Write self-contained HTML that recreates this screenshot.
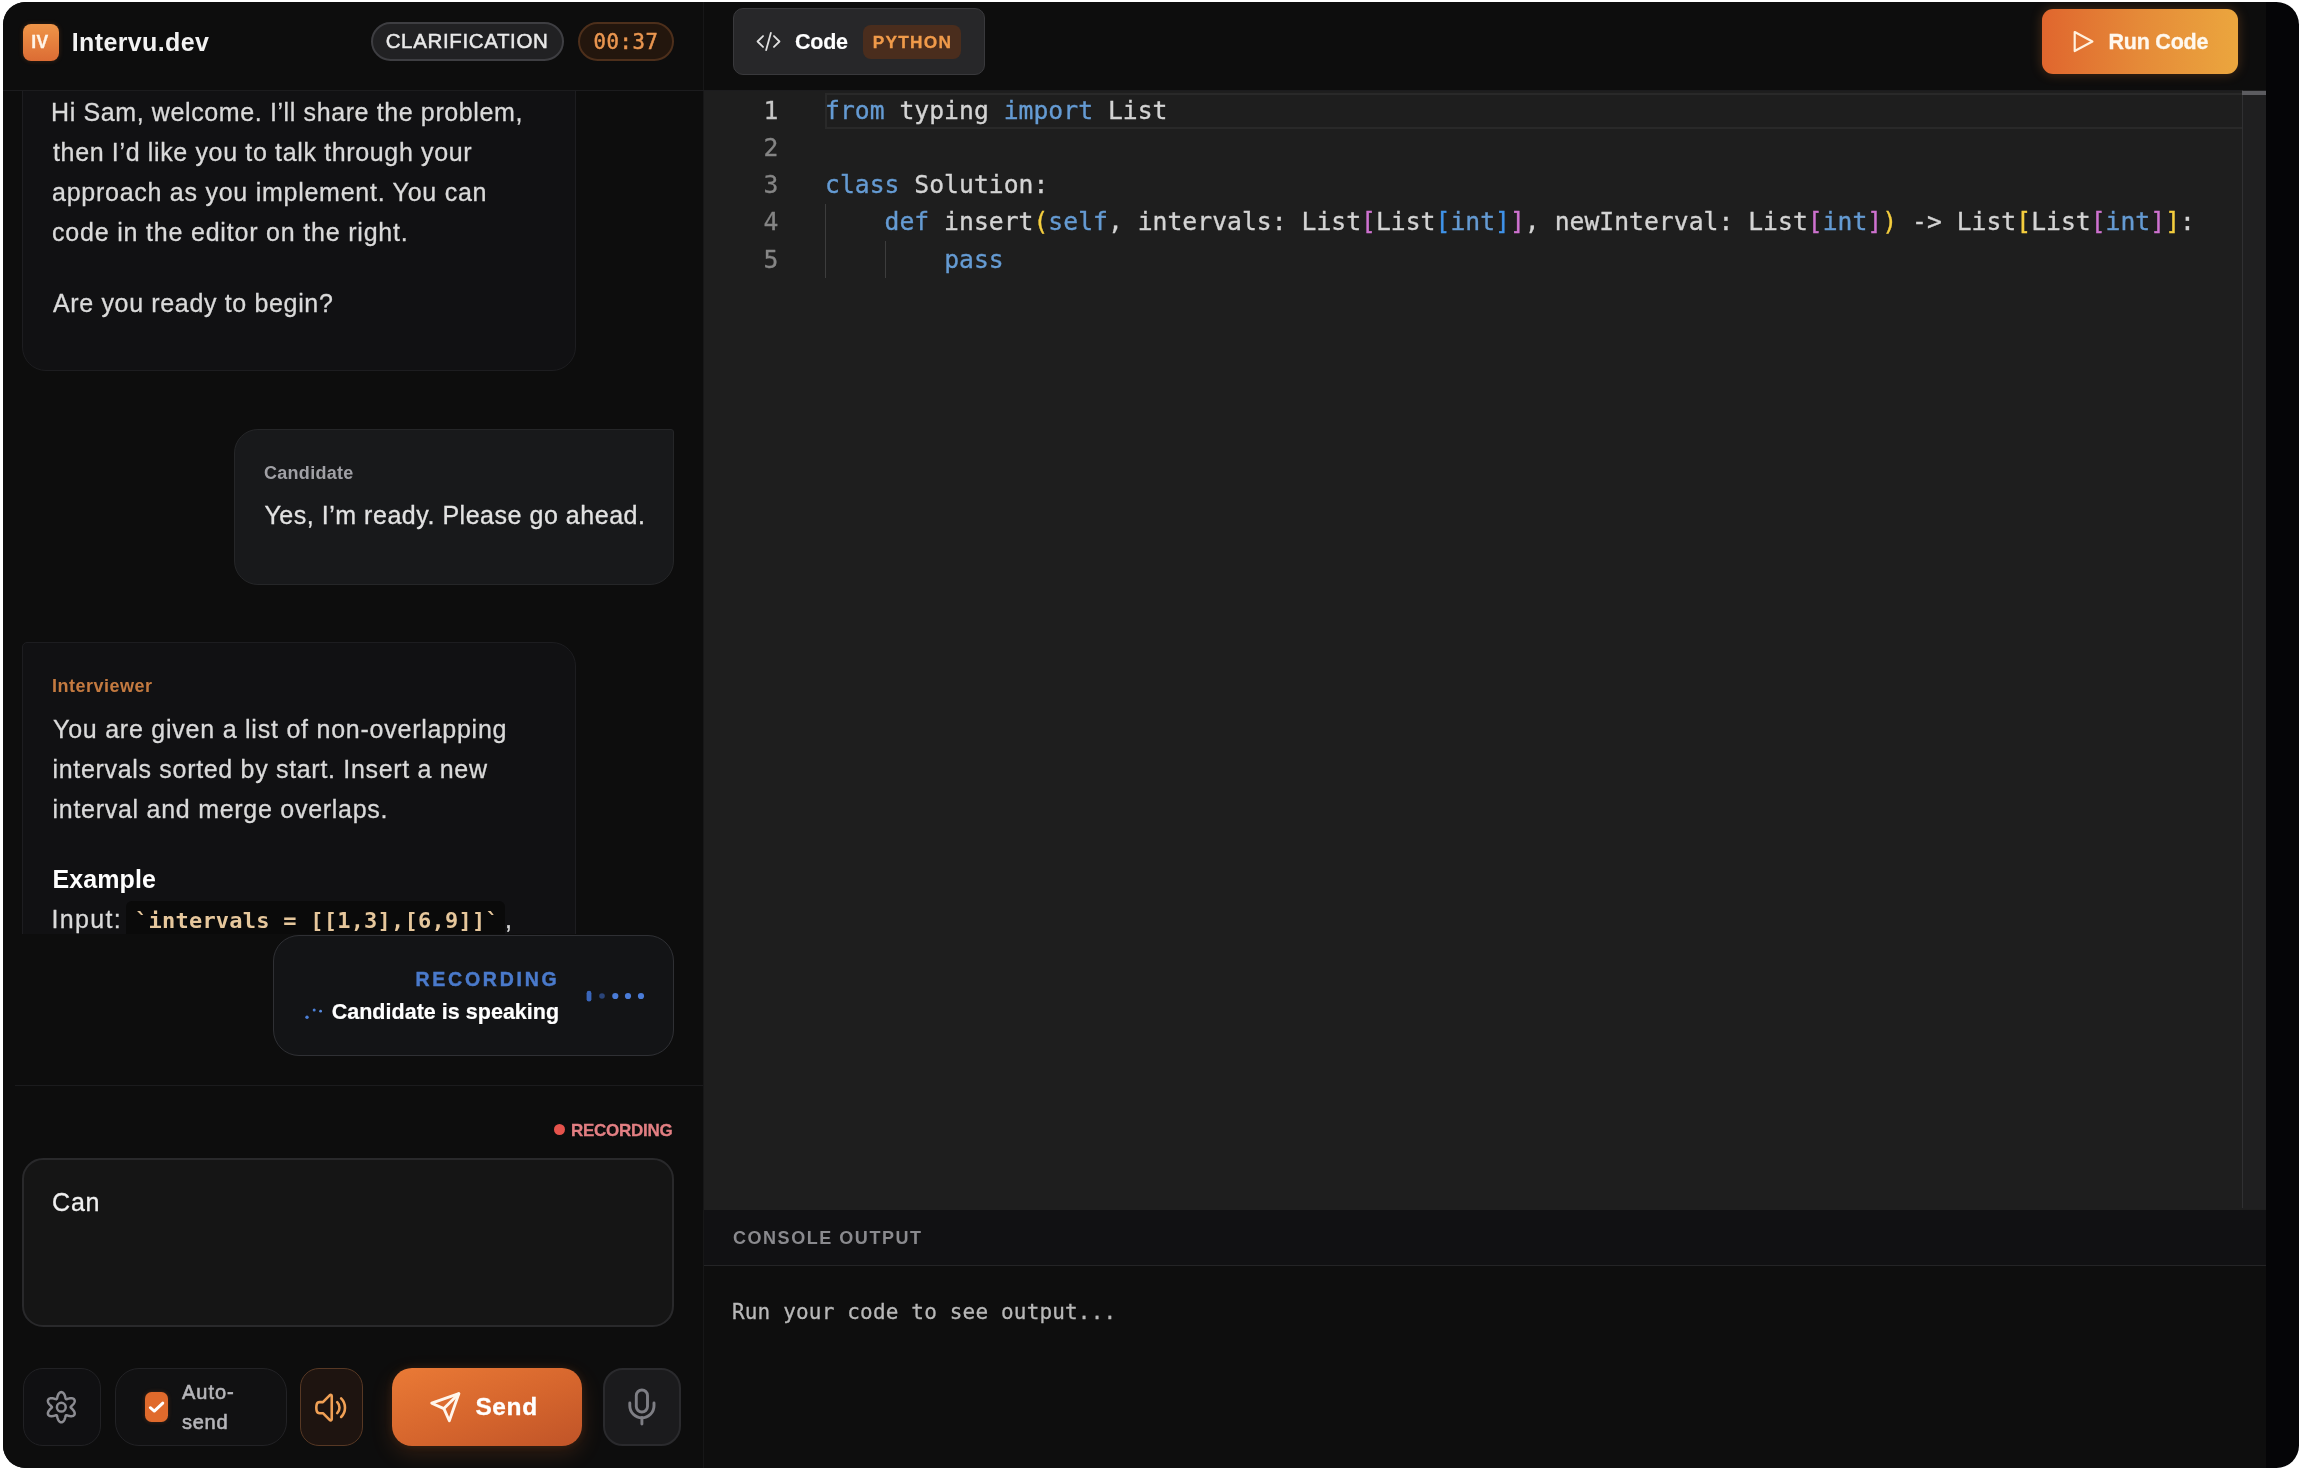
<!DOCTYPE html>
<html lang="en">
<head>
<meta charset="utf-8">
<title>Intervu.dev</title>
<style>
html,body{margin:0;padding:0;background:#ffffff;}
body{width:2300px;height:1470px;overflow:hidden;position:relative;font-family:"Liberation Sans",sans-serif;}
#win{position:absolute;left:3px;top:2px;width:2296px;height:1466px;border-radius:22.5px;overflow:hidden;background:#050507;}
#page{position:absolute;left:-3px;top:-2px;width:2300px;height:1470px;will-change:transform;}
#page div,#page svg{position:absolute;box-sizing:border-box;}
.t{position:absolute;white-space:pre;line-height:1.2;}

#chat{left:3px;top:91px;width:700px;height:843px;overflow:hidden;}
#chat>div,#chat>span{margin-left:-3px;margin-top:-91px;}
</style>
</head>
<body>
<div id="win"><div id="page">

<!-- panels -->
<div style="left:3px;top:2px;width:700px;height:1466px;background:#0d0d0d;"></div>
<div style="left:703px;top:2px;width:1px;height:1466px;background:#171718;"></div>
<div style="left:704px;top:2px;width:1562px;height:88px;background:#0d0d0d;"></div>
<div style="left:704px;top:90.5px;width:1562px;height:1119.5px;background:#1e1e1e;"></div>
<div style="left:704px;top:1210px;width:1562px;height:56px;background:#111113;border-bottom:1px solid #242426;"></div>
<div style="left:704px;top:1266px;width:1562px;height:202px;background:#0e0e0e;"></div>
<div style="left:3px;top:90px;width:2263px;height:1px;background:#1c1c1e;"></div>

<!-- left header -->
<div style="left:22.5px;top:24px;width:36px;height:36.5px;border-radius:8px;background:linear-gradient(180deg,#ef9548 0%,#dc6c34 100%);box-shadow:0 0 5px rgba(230,120,50,.22);"></div>
<div style="left:371px;top:22px;width:193px;height:39px;border-radius:20px;background:#212123;border:2px solid #3e3e42;"></div>
<div style="left:578px;top:22px;width:96px;height:39px;border-radius:20px;background:#23160d;border:2px solid #4d2f1b;"></div>

<!-- chat -->
<div id="chat">
  <div style="left:22px;top:20px;width:554px;height:351px;border-radius:6px 24px 24px 24px;background:#111113;border:1px solid #1d1d20;"></div>
  <div style="left:234px;top:429px;width:440px;height:156px;border-radius:24px 3px 24px 24px;background:#18191b;border:1.5px solid #252628;"></div>
  <div style="left:22px;top:642px;width:554px;height:500px;border-radius:5px 24px 24px 24px;background:#111113;border:1px solid #1d1d20;"></div>
  <div style="left:126px;top:901px;width:379px;height:44px;border-radius:6px;background:#0a0a0a;"></div>
<span class="t" id="t4" style="left:51.00px;top:97.00px;font:400 25px/1.2 'Liberation Sans', sans-serif;color:#dadada;letter-spacing:0.617px;-webkit-text-stroke:.3px;">Hi Sam, welcome. I’ll share the problem,</span>
<span class="t" id="t5" style="left:53.00px;top:137.00px;font:400 25px/1.2 'Liberation Sans', sans-serif;color:#dadada;letter-spacing:0.647px;-webkit-text-stroke:.3px;">then I’d like you to talk through your</span>
<span class="t" id="t6" style="left:52.00px;top:177.00px;font:400 25px/1.2 'Liberation Sans', sans-serif;color:#dadada;letter-spacing:0.741px;-webkit-text-stroke:.3px;">approach as you implement. You can</span>
<span class="t" id="t7" style="left:52.00px;top:217.00px;font:400 25px/1.2 'Liberation Sans', sans-serif;color:#dadada;letter-spacing:0.806px;-webkit-text-stroke:.3px;">code in the editor on the right.</span>
<span class="t" id="t8" style="left:53.00px;top:288.00px;font:400 25px/1.2 'Liberation Sans', sans-serif;color:#dadada;letter-spacing:0.652px;-webkit-text-stroke:.3px;">Are you ready to begin?</span>
<span class="t" id="t9" style="left:264.00px;top:462.70px;font:700 18px/1.2 'Liberation Sans', sans-serif;color:#a0a0a5;letter-spacing:0.287px;">Candidate</span>
<span class="t" id="t10" style="left:264.40px;top:500.30px;font:400 25px/1.2 'Liberation Sans', sans-serif;color:#e2e2e2;letter-spacing:0.530px;-webkit-text-stroke:.3px;">Yes, I’m ready. Please go ahead.</span>
<span class="t" id="t11" style="left:52.00px;top:676.00px;font:700 18px/1.2 'Liberation Sans', sans-serif;color:#c47a40;letter-spacing:0.496px;">Interviewer</span>
<span class="t" id="t12" style="left:53.00px;top:713.50px;font:400 25px/1.2 'Liberation Sans', sans-serif;color:#dadada;letter-spacing:0.767px;-webkit-text-stroke:.3px;">You are given a list of non-overlapping</span>
<span class="t" id="t13" style="left:52.50px;top:754.00px;font:400 25px/1.2 'Liberation Sans', sans-serif;color:#dadada;letter-spacing:0.683px;-webkit-text-stroke:.3px;">intervals sorted by start. Insert a new</span>
<span class="t" id="t14" style="left:52.50px;top:793.50px;font:400 25px/1.2 'Liberation Sans', sans-serif;color:#dadada;letter-spacing:0.726px;-webkit-text-stroke:.3px;">interval and merge overlaps.</span>
<span class="t" id="t15" style="left:52.50px;top:863.50px;font:700 25px/1.2 'Liberation Sans', sans-serif;color:#ffffff;letter-spacing:0.095px;">Example</span>
<span class="t" id="t16" style="left:51.50px;top:904.00px;font:400 25px/1.2 'Liberation Sans', sans-serif;color:#dadada;letter-spacing:1.319px;-webkit-text-stroke:.3px;">Input:</span>
<span class="t" id="t17" style="left:135.00px;top:907.80px;font:700 22px/1.2 'DejaVu Sans Mono', 'Liberation Mono', monospace;color:#e6c79c;letter-spacing:0.232px;">`intervals = [[1,3],[6,9]]`</span>
<span class="t" id="t18" style="left:505.00px;top:903.80px;font:400 25px/1.2 'Liberation Sans', sans-serif;color:#dadada;letter-spacing:0.000px;-webkit-text-stroke:.3px;">,</span>
</div>

<!-- recording card -->
<div style="left:273px;top:935px;width:401px;height:121px;border-radius:26px;background:#131416;border:1.5px solid #2f3034;"></div>
<svg style="left:300px;top:1000px;" width="30" height="26" viewBox="300 1000 30 26"><circle cx="307" cy="1017.3" r="1.7" fill="#4b7fd6"/><circle cx="314.2" cy="1010" r="1.5" fill="#4b7fd6"/><circle cx="320.6" cy="1011.2" r="1.4" fill="#5a8ce0"/></svg>
<svg style="left:580px;top:985px;" width="70" height="22" viewBox="580 985 70 22"><rect x="586.6" y="990.8" width="4.8" height="10.8" rx="2.4" fill="#3a66ba"/><circle cx="602" cy="996" r="2.8" fill="#2a4478"/><circle cx="615.3" cy="996" r="3.1" fill="#4a7cd8"/><circle cx="628" cy="996" r="3.1" fill="#4a7cd8"/><circle cx="641" cy="996" r="3.1" fill="#4a7cd8"/></svg>

<!-- separator -->
<div style="left:15px;top:1085px;width:688px;height:1px;background:#1b1b1d;"></div>
<!-- red dot -->
<div style="left:554px;top:1123.8px;width:11px;height:11px;border-radius:50%;background:#e5534c;"></div>
<!-- input -->
<div style="left:22px;top:1158px;width:652px;height:169px;border-radius:21px;background:#151515;border:2px solid #29292b;"></div>

<!-- buttons -->
<div style="left:22.5px;top:1368px;width:78.5px;height:78px;border-radius:20px;background:#101012;border:1.5px solid #212124;"></div>
<svg style="left:40px;top:1386px;" width="44" height="44" viewBox="40 1386 44 44" fill="none" stroke="#8c8c92" stroke-width="2.5" stroke-linejoin="round"><path d="M70.60 1407.20 L70.75 1406.87 L71.05 1406.52 L71.43 1406.14 L71.87 1405.71 L72.34 1405.25 L72.82 1404.75 L73.28 1404.21 L73.71 1403.64 L74.07 1403.05 L74.37 1402.44 L74.58 1401.84 L74.69 1401.24 L74.69 1400.67 L74.59 1400.13 L74.38 1399.65 L74.06 1399.23 L73.65 1398.87 L73.15 1398.59 L72.58 1398.38 L71.95 1398.26 L71.28 1398.21 L70.58 1398.23 L69.88 1398.32 L69.18 1398.45 L68.51 1398.61 L67.87 1398.79 L67.29 1398.96 L66.76 1399.10 L66.31 1399.18 L65.95 1399.15 L65.74 1398.85 L65.58 1398.42 L65.44 1397.89 L65.30 1397.30 L65.14 1396.66 L64.94 1396.00 L64.70 1395.33 L64.42 1394.68 L64.09 1394.06 L63.72 1393.50 L63.29 1393.02 L62.83 1392.63 L62.34 1392.34 L61.83 1392.16 L61.30 1392.10 L60.77 1392.16 L60.26 1392.34 L59.77 1392.63 L59.31 1393.02 L58.88 1393.50 L58.51 1394.06 L58.18 1394.68 L57.90 1395.33 L57.66 1396.00 L57.46 1396.66 L57.30 1397.30 L57.16 1397.89 L57.02 1398.42 L56.86 1398.85 L56.65 1399.15 L56.29 1399.18 L55.84 1399.10 L55.31 1398.96 L54.73 1398.79 L54.09 1398.61 L53.42 1398.45 L52.72 1398.32 L52.02 1398.23 L51.32 1398.21 L50.65 1398.26 L50.02 1398.38 L49.45 1398.59 L48.95 1398.87 L48.54 1399.23 L48.22 1399.65 L48.01 1400.13 L47.91 1400.67 L47.91 1401.24 L48.02 1401.84 L48.23 1402.44 L48.53 1403.05 L48.89 1403.64 L49.32 1404.21 L49.78 1404.75 L50.26 1405.25 L50.73 1405.71 L51.17 1406.14 L51.55 1406.52 L51.85 1406.87 L52.00 1407.20 L51.85 1407.53 L51.55 1407.88 L51.17 1408.26 L50.73 1408.69 L50.26 1409.15 L49.78 1409.65 L49.32 1410.19 L48.89 1410.76 L48.53 1411.35 L48.23 1411.96 L48.02 1412.56 L47.91 1413.16 L47.91 1413.73 L48.01 1414.27 L48.22 1414.75 L48.54 1415.17 L48.95 1415.53 L49.45 1415.81 L50.02 1416.02 L50.65 1416.14 L51.32 1416.19 L52.02 1416.17 L52.72 1416.08 L53.42 1415.95 L54.09 1415.79 L54.73 1415.61 L55.31 1415.44 L55.84 1415.30 L56.29 1415.22 L56.65 1415.25 L56.86 1415.55 L57.02 1415.98 L57.16 1416.51 L57.30 1417.10 L57.46 1417.74 L57.66 1418.40 L57.90 1419.07 L58.18 1419.72 L58.51 1420.34 L58.88 1420.90 L59.31 1421.38 L59.77 1421.77 L60.26 1422.06 L60.77 1422.24 L61.30 1422.30 L61.83 1422.24 L62.34 1422.06 L62.83 1421.77 L63.29 1421.38 L63.72 1420.90 L64.09 1420.34 L64.42 1419.72 L64.70 1419.07 L64.94 1418.40 L65.14 1417.74 L65.30 1417.10 L65.44 1416.51 L65.58 1415.98 L65.74 1415.55 L65.95 1415.25 L66.31 1415.22 L66.76 1415.30 L67.29 1415.44 L67.87 1415.61 L68.51 1415.79 L69.18 1415.95 L69.88 1416.08 L70.58 1416.17 L71.28 1416.19 L71.95 1416.14 L72.58 1416.02 L73.15 1415.81 L73.65 1415.53 L74.06 1415.17 L74.38 1414.75 L74.59 1414.27 L74.69 1413.73 L74.69 1413.16 L74.58 1412.56 L74.37 1411.96 L74.07 1411.35 L73.71 1410.76 L73.28 1410.19 L72.82 1409.65 L72.34 1409.15 L71.87 1408.69 L71.43 1408.26 L71.05 1407.88 L70.75 1407.53Z"/><circle cx="61.3" cy="1407.2" r="4.4"/></svg>

<div style="left:115px;top:1368px;width:171.5px;height:78px;border-radius:24px;background:#111112;border:1.5px solid #222225;"></div>
<div style="left:144.5px;top:1392.2px;width:23px;height:29.5px;border-radius:6.5px;background:#e06a2c;box-shadow:0 0 4px rgba(224,106,44,.25);"></div>
<svg style="left:144px;top:1392px;" width="24" height="30" viewBox="144 1392 24 30" fill="none" stroke="#ffffff" stroke-width="2.9" stroke-linecap="round" stroke-linejoin="round"><path d="M150.3 1407.7 L154.3 1411.1 L162.8 1403.1"/></svg>

<div style="left:300.4px;top:1368px;width:63px;height:78px;border-radius:19px;background:#1e1410;border:1.5px solid #573824;"></div>
<svg style="left:312.7px;top:1389.5px;" width="35.3" height="35.3" viewBox="0 0 24 24" fill="none" stroke="#f0a055" stroke-width="1.75" stroke-linecap="round" stroke-linejoin="round"><path d="M19.114 5.636a9 9 0 0 1 0 12.728M16.463 8.288a5.25 5.25 0 0 1 0 7.424M6.75 8.25l4.72-4.72a.75.75 0 0 1 1.28.53v15.88a.75.75 0 0 1-1.28.53l-4.72-4.72H4.51c-.88 0-1.704-.507-1.938-1.354A9.009 9.009 0 0 1 2.25 12c0-.83.112-1.633.322-2.396C2.806 8.756 3.63 8.25 4.51 8.25H6.75Z"/></svg>

<div style="left:392px;top:1367.5px;width:189.5px;height:78.5px;border-radius:20px;background:linear-gradient(160deg,#ea7a36 0%,#d5652d 55%,#c05428 100%);box-shadow:0 8px 22px rgba(232,112,44,.16),0 0 8px rgba(232,112,44,.12);"></div>
<svg style="left:428.5px;top:1391px;" width="32.5" height="32.5" viewBox="0 0 24 24" fill="none" stroke="#fff6ec" stroke-width="2.1" stroke-linecap="round" stroke-linejoin="round"><line x1="22" y1="2" x2="11" y2="13"/><polygon points="22 2 15 22 11 13 2 9 22 2"/></svg>

<div style="left:603.3px;top:1368.3px;width:77.5px;height:78px;border-radius:20px;background:#1b1b1d;border:2px solid #2a2a2d;"></div>
<svg style="left:620px;top:1384px;" width="44" height="46" viewBox="620 1384 44 46" fill="none" stroke="#7e7e84" stroke-width="2.9" stroke-linecap="round"><rect x="636.3" y="1390" width="11.2" height="22" rx="5.6"/><path d="M629.8 1403 V1405.7 A12.1 12.1 0 0 0 654 1405.7 V1403"/><path d="M641.9 1417.8 V1424"/></svg>

<!-- right header -->
<div style="left:732.5px;top:8px;width:252px;height:67px;border-radius:10px;background:#272729;border:1.5px solid #39393c;"></div>
<svg style="left:755.5px;top:28.9px;" width="25" height="25" viewBox="0 0 24 24" fill="none" stroke="#e0e0e0" stroke-width="1.7" stroke-linecap="round" stroke-linejoin="round"><path d="M17.25 6.75 22.5 12l-5.25 5.25m-10.5 0L1.5 12l5.25-5.25m7.5-3-4.5 16.5"/></svg>
<div style="left:863px;top:25px;width:98px;height:33.5px;border-radius:8px;background:#4a2d1d;"></div>

<div style="left:2041.5px;top:9px;width:196.5px;height:65px;border-radius:11px;background:linear-gradient(90deg,#e0662e 0%,#e58a38 50%,#eba63e 100%);box-shadow:0 0 12px rgba(235,130,50,.28);"></div>
<svg style="left:2068px;top:26px;" width="32" height="32" viewBox="2068 26 32 32" fill="none" stroke="#fff1de" stroke-width="2.2" stroke-linejoin="round"><path d="M2074.7 32 L2092.4 41.5 L2074.7 51 Z"/></svg>

<!-- editor decorations -->
<div style="left:825px;top:92.5px;width:1417px;height:36.5px;border:2px solid #292929;border-right:none;"></div>
<div style="left:2242px;top:90px;width:1px;height:1118px;background:#303032;"></div>
<div style="left:2243px;top:90px;width:23px;height:1119px;background:#1f1f20;"></div>
<div style="left:2242px;top:91px;width:24px;height:4px;background:#5c5c60;"></div>
<div style="left:825.2px;top:204px;width:1.3px;height:74px;background:#3d3d3d;"></div>
<div style="left:884.8px;top:241px;width:1.3px;height:37px;background:#3d3d3d;"></div>

<span class="t" id="t0" style="left:31.20px;top:32.00px;font:700 17.5px/1.2 'Liberation Sans', sans-serif;color:#fff4e8;letter-spacing:0.538px;-webkit-text-stroke:.3px;">IV</span>
<span class="t" id="t1" style="left:71.80px;top:26.60px;font:700 25px/1.2 'Liberation Sans', sans-serif;color:#f2f2f2;letter-spacing:0.373px;">Intervu.dev</span>
<span class="t" id="t2" style="left:385.70px;top:29.30px;font:400 20.5px/1.2 'Liberation Sans', sans-serif;color:#e9e9e9;letter-spacing:0.632px;-webkit-text-stroke:.5px;">CLARIFICATION</span>
<span class="t" id="t3" style="left:593.50px;top:30.00px;font:400 20.6px/1.2 'DejaVu Sans Mono', 'Liberation Mono', monospace;color:#ea9650;letter-spacing:0.602px;-webkit-text-stroke:.5px;">00:37</span>
<span class="t" id="t19" style="left:415.50px;top:968.40px;font:700 19.5px/1.2 'Liberation Sans', sans-serif;color:#4a7acb;letter-spacing:2.750px;-webkit-text-stroke:.45px;">RECORDING</span>
<span class="t" id="t20" style="left:331.70px;top:1000.00px;font:700 21.5px/1.2 'Liberation Sans', sans-serif;color:#ffffff;letter-spacing:0.021px;-webkit-text-stroke:.2px;">Candidate is speaking</span>
<span class="t" id="t21" style="left:571.00px;top:1120.50px;font:700 17px/1.2 'Liberation Sans', sans-serif;color:#e37f83;letter-spacing:-0.259px;-webkit-text-stroke:.3px;">RECORDING</span>
<span class="t" id="t22" style="left:52.00px;top:1186.50px;font:400 25px/1.2 'Liberation Sans', sans-serif;color:#f0f0f0;letter-spacing:0.821px;-webkit-text-stroke:.3px;">Can</span>
<span class="t" id="t23" style="left:181.90px;top:1380.00px;font:400 20px/1.2 'Liberation Sans', sans-serif;color:#b6b6ba;letter-spacing:1.014px;-webkit-text-stroke:.6px;">Auto-</span>
<span class="t" id="t24" style="left:181.90px;top:1409.50px;font:400 20px/1.2 'Liberation Sans', sans-serif;color:#b6b6ba;letter-spacing:0.785px;-webkit-text-stroke:.6px;">send</span>
<span class="t" id="t25" style="left:475.40px;top:1392.00px;font:700 24.5px/1.2 'Liberation Sans', sans-serif;color:#ffffff;letter-spacing:0.622px;-webkit-text-stroke:.3px;">Send</span>
<span class="t" id="t26" style="left:795.00px;top:30.00px;font:700 21.5px/1.2 'Liberation Sans', sans-serif;color:#ffffff;letter-spacing:-0.264px;-webkit-text-stroke:.15px;">Code</span>
<span class="t" id="t27" style="left:872.70px;top:32.00px;font:700 17.3px/1.2 'Liberation Sans', sans-serif;color:#f09a4a;letter-spacing:1.234px;-webkit-text-stroke:.3px;">PYTHON</span>
<span class="t" id="t28" style="left:2108.40px;top:30.00px;font:700 21.5px/1.2 'Liberation Sans', sans-serif;color:#fff8ee;letter-spacing:-0.208px;-webkit-text-stroke:.3px;">Run Code</span>
<span class="t" id="t29" style="left:733.00px;top:1228.00px;font:700 18px/1.2 'Liberation Sans', sans-serif;color:#8a8a8e;letter-spacing:1.538px;">CONSOLE OUTPUT</span>
<span class="t" id="t30" style="left:732.00px;top:1300.00px;font:400 21px/1.2 'DejaVu Sans Mono', 'Liberation Mono', monospace;color:#b8b8b8;letter-spacing:0.167px;-webkit-text-stroke:.3px;">Run your code to see output...</span>
<span class="t" id="t31" style="left:763.50px;top:95.70px;font:400 24.7px/1.2 'DejaVu Sans Mono', 'Liberation Mono', monospace;color:#c8c8c8;letter-spacing:0.027px;-webkit-text-stroke:.3px;">1</span>
<span class="t" id="t32" style="left:763.50px;top:132.90px;font:400 24.7px/1.2 'DejaVu Sans Mono', 'Liberation Mono', monospace;color:#858585;letter-spacing:0.027px;-webkit-text-stroke:.3px;">2</span>
<span class="t" id="t33" style="left:763.50px;top:170.10px;font:400 24.7px/1.2 'DejaVu Sans Mono', 'Liberation Mono', monospace;color:#858585;letter-spacing:0.027px;-webkit-text-stroke:.3px;">3</span>
<span class="t" id="t34" style="left:763.50px;top:207.30px;font:400 24.7px/1.2 'DejaVu Sans Mono', 'Liberation Mono', monospace;color:#858585;letter-spacing:0.027px;-webkit-text-stroke:.3px;">4</span>
<span class="t" id="t35" style="left:763.50px;top:244.50px;font:400 24.7px/1.2 'DejaVu Sans Mono', 'Liberation Mono', monospace;color:#858585;letter-spacing:0.027px;-webkit-text-stroke:.3px;">5</span>
<span class="t" id="t36" style="left:825.00px;top:95.70px;font:400 24.7px/1.2 'DejaVu Sans Mono', 'Liberation Mono', monospace;color:#d4d4d4;letter-spacing:0.027px;-webkit-text-stroke:.35px;"><span style="color:#659bd3">from</span> typing <span style="color:#659bd3">import</span> List</span>
<span class="t" id="t37" style="left:825.00px;top:170.10px;font:400 24.7px/1.2 'DejaVu Sans Mono', 'Liberation Mono', monospace;color:#d4d4d4;letter-spacing:0.027px;-webkit-text-stroke:.35px;"><span style="color:#659bd3">class</span> Solution:</span>
<span class="t" id="t38" style="left:825.00px;top:207.30px;font:400 24.7px/1.2 'DejaVu Sans Mono', 'Liberation Mono', monospace;color:#d4d4d4;letter-spacing:0.027px;-webkit-text-stroke:.35px;">    <span style="color:#659bd3">def</span> insert<span style="color:#f5ce3e">(</span><span style="color:#659bd3">self</span>, intervals: List<span style="color:#cf72d0">[</span>List<span style="color:#3f93ea">[</span><span style="color:#659bd3">int</span><span style="color:#3f93ea">]</span><span style="color:#cf72d0">]</span>, newInterval: List<span style="color:#cf72d0">[</span><span style="color:#659bd3">int</span><span style="color:#cf72d0">]</span><span style="color:#f5ce3e">)</span> -&gt; List<span style="color:#f5ce3e">[</span>List<span style="color:#cf72d0">[</span><span style="color:#659bd3">int</span><span style="color:#cf72d0">]</span><span style="color:#f5ce3e">]</span>:</span>
<span class="t" id="t39" style="left:825.00px;top:244.50px;font:400 24.7px/1.2 'DejaVu Sans Mono', 'Liberation Mono', monospace;color:#d4d4d4;letter-spacing:0.027px;-webkit-text-stroke:.35px;">        <span style="color:#659bd3">pass</span></span>
</div></div>
</body>
</html>
